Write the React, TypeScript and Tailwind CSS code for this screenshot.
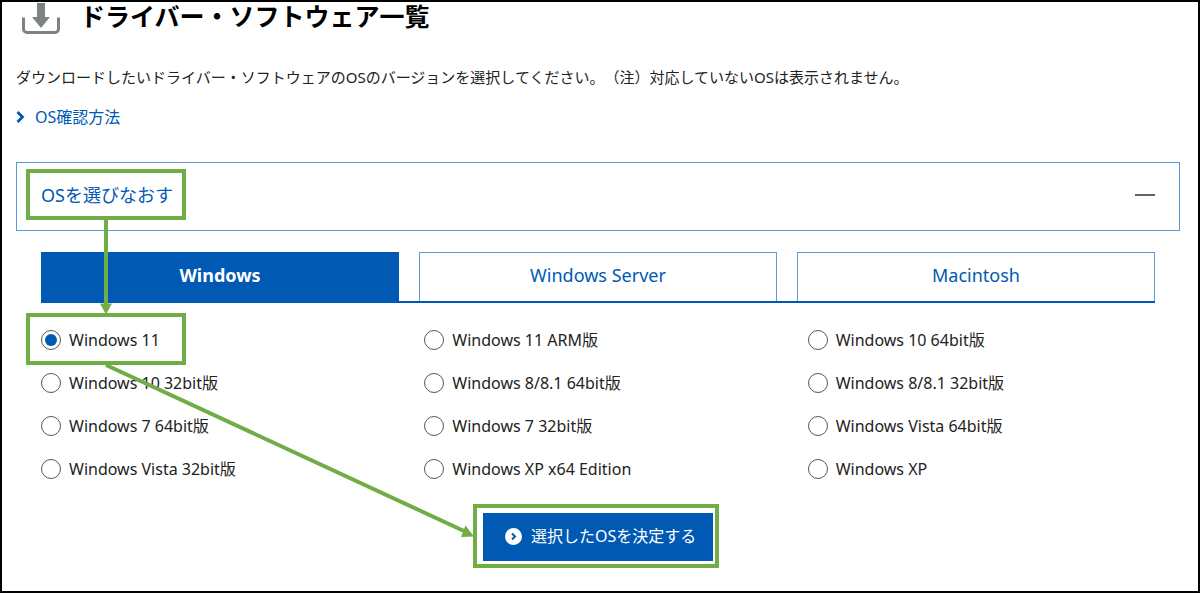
import { useState } from "react";

const TABS = ["Windows", "Windows Server", "Macintosh"];

const OS_LIST = [
  "Windows 11",
  "Windows 11 ARM版",
  "Windows 10 64bit版",
  "Windows 10 32bit版",
  "Windows 8/8.1 64bit版",
  "Windows 8/8.1 32bit版",
  "Windows 7 64bit版",
  "Windows 7 32bit版",
  "Windows Vista 64bit版",
  "Windows Vista 32bit版",
  "Windows XP x64 Edition",
  "Windows XP",
];

function DownloadIcon() {
  return (
    <svg viewBox="0 0 38 32" className="h-8 w-[38px] shrink-0" aria-hidden="true">
      <path d="M15 1h8v14h5l-9 11-9-11h5z" fill="#7d8285" />
      <path
        d="M1.500 15.500v11.500a3.500 3.500 0 0 0 3.500 3.500h28a3.500 3.500 0 0 0 3.500-3.500V15.500"
        fill="none"
        stroke="#7d8285"
        strokeWidth="3"
      />
    </svg>
  );
}

function Arrows() {
  return (
    <svg
      className="pointer-events-none absolute top-0 left-0 h-[593px] w-[1200px]"
      viewBox="0 0 1200 593"
      aria-hidden="true"
    >
      <path d="M106 219V305M106 365L464 531" stroke="#70ad47" strokeWidth="4" fill="none" />
      <path d="M100 303.500h12l-6 11zM465.500 525.500L474 536.500L461 537z" fill="#70ad47" />
    </svg>
  );
}

export default function App() {
  const [tab, setTab] = useState("Windows");
  const [os, setOs] = useState("Windows 11");
  const [open, setOpen] = useState(true);

  return (
    <div className="relative min-h-screen bg-black p-[2px] font-['Noto_Sans','Noto_Sans_CJK_JP',sans-serif] text-[#222]">
      <main className="min-h-[calc(100vh-4px)] bg-white pr-[18px] pl-[14px]">
        <header className="flex h-[30px] items-start gap-5 pl-[6px]">
          <DownloadIcon />
          <h1 className="text-[25px] leading-7 font-bold text-black">ドライバー・ソフトウェア一覧</h1>
        </header>

        <p className="mt-[33px] text-[15px] leading-6 [text-spacing-trim:space-all]">
          ダウンロードしたいドライバー・ソフトウェアのOSのバージョンを選択してください。（注）対応していないOSは表示されません。
        </p>
        <a href="#os" className="mt-4 inline-flex items-center gap-[10px] text-base leading-6 text-[#0059b3]">
          <svg viewBox="0 0 9 12" className="h-3 w-[9px]" aria-hidden="true">
            <path d="M1.500 1l5 5-5 5" fill="none" stroke="currentColor" strokeWidth="2.800" />
          </svg>
          OS確認方法
        </a>

        <section className="mt-[33px]">
          <button
            type="button"
            aria-expanded={open}
            onClick={() => setOpen(!open)}
            className="relative flex h-[69px] w-full items-center justify-between border border-[#5c9ad6] pr-6 pb-1 pl-6 text-lg text-[#0059b3]"
          >
            OSを選びなおす
            <span className="h-[2px] w-5 bg-[#666]" />
            <span className="absolute top-[6px] left-[9px] h-[51px] w-40 border-4 border-[#70ad47]" />
          </button>

          {open && (
            <div className="px-[25px] pt-[21px]">
              <div role="tablist" className="grid grid-cols-3 gap-5 border-b-2 border-[#0059b3]">
                {TABS.map((name) => (
                  <button
                    key={name}
                    type="button"
                    role="tab"
                    aria-selected={tab === name}
                    onClick={() => setTab(name)}
                    className={
                      tab === name
                        ? "h-[49px] border border-b-0 border-[#0059b3] bg-[#0059b3] pb-1 text-lg font-bold text-white"
                        : "h-[49px] border border-b-0 border-[#5c9ad6] bg-white pb-1 text-lg text-[#0059b3]"
                    }
                  >
                    {name}
                  </button>
                ))}
              </div>

              <div role="radiogroup" aria-label="OS" className="mt-[15px] grid grid-cols-3 gap-x-9">
                {OS_LIST.map((name, i) => (
                  <label key={name} className="relative flex h-[43px] items-center gap-2 text-base">
                    <input
                      type="radio"
                      name="os"
                      value={name}
                      checked={os === name}
                      onChange={() => setOs(name)}
                      className="grid size-5 shrink-0 appearance-none place-items-center rounded-full border border-[#555] before:size-3 before:rounded-full checked:before:bg-[#0059b3]"
                    />
                    {name}
                    {i === 0 && (
                      <span className="absolute -top-[5px] -left-[15px] h-[52px] w-40 border-4 border-[#70ad47]" />
                    )}
                  </label>
                ))}
              </div>

              <div className="mt-[23px] flex justify-center">
                <button
                  type="button"
                  className="relative flex h-12 w-[230px] items-center gap-[9px] bg-[#0059b3] pb-[2px] pl-[22px] text-base text-white"
                >
                  <svg viewBox="0 0 17 17" className="size-[17px] shrink-0" aria-hidden="true">
                    <circle cx="8.500" cy="8.500" r="8.500" fill="#fff" />
                    <path d="M7 5.500l3 3-3 3" fill="none" stroke="#0059b3" strokeWidth="2" />
                  </svg>
                  選択したOSを決定する
                  <span className="absolute -top-[9px] -right-[6px] -bottom-[7px] -left-[10px] border-4 border-[#70ad47]" />
                </button>
              </div>
            </div>
          )}
        </section>
      </main>
      <Arrows />
    </div>
  );
}
